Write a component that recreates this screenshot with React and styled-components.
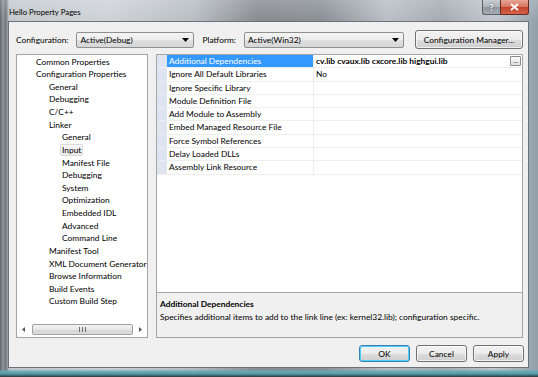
import React from 'react';
import styled, { createGlobalStyle, css } from 'styled-components';

const GlobalStyle = createGlobalStyle`
  html, body {
    margin: 0;
    padding: 0;
  }
  body {
    width: 538px;
    height: 377px;
    overflow: hidden;
    font-family: "Segoe UI", Lato, "Noto Sans", sans-serif;
    color: #000;
  }
`;

const treeItems = [
  { label: 'Common Properties', level: 0 },
  { label: 'Configuration Properties', level: 0 },
  { label: 'General', level: 1 },
  { label: 'Debugging', level: 1 },
  { label: 'C/C++', level: 1 },
  { label: 'Linker', level: 1 },
  { label: 'General', level: 2 },
  { label: 'Input', level: 2, selected: true },
  { label: 'Manifest File', level: 2 },
  { label: 'Debugging', level: 2 },
  { label: 'System', level: 2 },
  { label: 'Optimization', level: 2 },
  { label: 'Embedded IDL', level: 2 },
  { label: 'Advanced', level: 2 },
  { label: 'Command Line', level: 2 },
  { label: 'Manifest Tool', level: 1 },
  { label: 'XML Document Generator', level: 1 },
  { label: 'Browse Information', level: 1 },
  { label: 'Build Events', level: 1 },
  { label: 'Custom Build Step', level: 1 },
];

const properties = [
  { name: 'Additional Dependencies', value: 'cv.lib cvaux.lib cxcore.lib highgui.lib', bold: true, selected: true },
  { name: 'Ignore All Default Libraries', value: 'No' },
  { name: 'Ignore Specific Library', value: '' },
  { name: 'Module Definition File', value: '' },
  { name: 'Add Module to Assembly', value: '' },
  { name: 'Embed Managed Resource File', value: '' },
  { name: 'Force Symbol References', value: '' },
  { name: 'Delay Loaded DLLs', value: '' },
  { name: 'Assembly Link Resource', value: '' },
];

const DropArrow = () => (
  <svg width="7" height="4" viewBox="0 0 7 4">
    <path d="M0 0h7L3.5 4z" fill="#000" />
  </svg>
);

const App = () => {
  return (
    <>
      <GlobalStyle />
      <Window>
        <TitleBar>
          <Title>Hello Property Pages</Title>
          <Controls>
            <HelpButton>?</HelpButton>
            <CloseButton>
              <svg width="9" height="8" viewBox="0 0 9 8">
                <path d="M1 1l7 6M8 1L1 7" stroke="#fff" strokeWidth="1.8" />
              </svg>
            </CloseButton>
          </Controls>
        </TitleBar>
        <Client>
          <ConfigRow>
            <FieldLabel>Configuration:</FieldLabel>
            <Combo $width={118}>
              <span>Active(Debug)</span>
              <DropArrow />
            </Combo>
            <FieldLabel $gap={8}>Platform:</FieldLabel>
            <Combo $width={160}>
              <span>Active(Win32)</span>
              <DropArrow />
            </Combo>
            <ManagerButton>Configuration Manager...</ManagerButton>
          </ConfigRow>

          <Main>
            <TreePanel>
              <TreeList>
                {treeItems.map((item, i) => (
                  <TreeItem key={i} $level={item.level}>
                    <TreeLabel $selected={item.selected}>{item.label}</TreeLabel>
                  </TreeItem>
                ))}
              </TreeList>
              <HScroll>
                <ScrollArrow>
                  <svg width="3" height="5" viewBox="0 0 3 5">
                    <path d="M3 0v5L0 2.5z" fill="#555" />
                  </svg>
                </ScrollArrow>
                <ScrollTrack>
                  <Thumb>
                    <Grip />
                  </Thumb>
                </ScrollTrack>
                <ScrollArrow>
                  <svg width="3" height="5" viewBox="0 0 3 5">
                    <path d="M0 0v5L3 2.5z" fill="#555" />
                  </svg>
                </ScrollArrow>
              </HScroll>
            </TreePanel>

            <RightColumn>
              <Grid>
                {properties.map((p, i) => (
                  <PropRow key={i}>
                    <Gutter />
                    <PropName $selected={p.selected}>{p.name}</PropName>
                    <PropValue $bold={p.bold}>
                      <span>{p.value}</span>
                      {p.selected && <EllipsisButton>...</EllipsisButton>}
                    </PropValue>
                  </PropRow>
                ))}
              </Grid>
              <Description>
                <DescTitle>Additional Dependencies</DescTitle>
                <DescText>
                  Specifies additional items to add to the link line (ex: kernel32.lib); configuration specific.
                </DescText>
              </Description>
            </RightColumn>
          </Main>

          <ButtonRow>
            <DialogButton $default>OK</DialogButton>
            <DialogButton>Cancel</DialogButton>
            <DialogButton>Apply</DialogButton>
          </ButtonRow>
        </Client>
      </Window>
    </>
  );
};

const Window = styled.div`
  width: 538px;
  height: 377px;
  box-sizing: border-box;
  display: flex;
  flex-direction: column;
  padding: 0 9px 9px 8px;
  background:
    linear-gradient(180deg, rgba(255, 255, 255, 0.18) 0px, rgba(255, 255, 255, 0) 21px),
    linear-gradient(0deg, #2e3438 0px, #4f98a4 3px, #62a7b2 5px, rgba(160, 168, 174, 0) 8px),
    linear-gradient(90deg, #5d6268 0px, #8e959b 3px, #6d7378 6px, #c3c9ce 9px, #cdd2d6 20%, #b7bdc2 36%, #868b90 48%, #8a9095 60%, #b9bfc4 72%, #a4abb1 82%, #c2c8cd 92%, #93a0aa 100%);
`;

const TitleBar = styled.div`
  height: 21px;
  display: flex;
  justify-content: space-between;
  align-items: flex-start;
  padding-left: 1px;
`;

const Title = styled.div`
  font-size: 7.8px;
  line-height: 12px;
  margin-top: 6px;
  color: #000;
`;

const Controls = styled.div`
  display: flex;
`;

const captionButton = css`
  height: 15px;
  box-sizing: border-box;
  display: flex;
  align-items: center;
  justify-content: center;
  border: 1px solid #5a6068;
  border-top: none;
`;

const HelpButton = styled.div`
  ${captionButton};
  width: 18px;
  border-right: none;
  border-radius: 0 0 0 3px;
  font-size: 10px;
  font-weight: bold;
  color: #fff;
  text-shadow: 0 0 2px #333;
  background: linear-gradient(180deg, #c9ced3 0%, #aab1b7 50%, #8f979e 51%, #a7afb6 100%);
`;

const CloseButton = styled.div`
  ${captionButton};
  width: 29px;
  border-color: #6a2a20;
  border-radius: 0 0 3px 0;
  background: linear-gradient(180deg, #e8a497 0%, #d7735f 50%, #c2412a 51%, #d2664b 100%);
`;

const Client = styled.div`
  flex: 1;
  display: flex;
  flex-direction: column;
  background: #f0f0f0;
  border: 1px solid #6c7278;
  padding: 8px 5px 0 7px;
  font-size: 8.4px;
`;

const ConfigRow = styled.div`
  height: 19px;
  display: flex;
  align-items: center;
`;

const FieldLabel = styled.span`
  margin-left: ${(p) => p.$gap || 0}px;
  margin-right: 8px;
  white-space: nowrap;
`;

const Combo = styled.div`
  width: ${(p) => p.$width}px;
  height: 16px;
  box-sizing: border-box;
  display: flex;
  align-items: center;
  justify-content: space-between;
  padding: 0 4px 0 3px;
  border: 1px solid #8e8f8f;
  border-radius: 2px;
  background: linear-gradient(180deg, #f4f4f4 0%, #ececec 50%, #e0e0e0 51%, #d6d6d6 100%);
`;

const buttonFace = css`
  box-sizing: border-box;
  display: flex;
  align-items: center;
  justify-content: center;
  border: 1px solid #707070;
  border-radius: 3px;
  background: linear-gradient(180deg, #f2f2f2 0%, #ebebeb 50%, #dddddd 51%, #cfcfcf 100%);
  box-shadow: inset 0 0 0 1px rgba(255, 255, 255, 0.7);
`;

const ManagerButton = styled.div`
  ${buttonFace};
  width: 108px;
  height: 19px;
  margin-left: auto;
`;

const Main = styled.div`
  display: flex;
  gap: 8px;
  margin-top: 5px;
  height: 284px;
`;

const TreePanel = styled.div`
  width: 132px;
  box-sizing: border-box;
  display: flex;
  flex-direction: column;
  border: 1px solid #a5a5a5;
  background: #fff;
`;

const TreeList = styled.div`
  flex: 1;
  overflow: hidden;
  padding-top: 0.5px;
`;

const TreeItem = styled.div`
  height: 12.63px;
  line-height: 12.63px;
  white-space: nowrap;
  padding-left: ${(p) => 19 + p.$level * 13}px;
`;

const TreeLabel = styled.span`
  display: inline-block;
  padding: 0 1px;
  margin-left: -2px;
  border: 1px solid transparent;
  line-height: 10.6px;
  ${(p) =>
    p.$selected &&
    css`
      border-color: #d9d9d9;
      border-radius: 2px;
      background: linear-gradient(180deg, #f8f8f8, #e9e9e9);
    `}
`;

const HScroll = styled.div`
  height: 13px;
  display: flex;
  align-items: center;
  margin: 0 0 1px 0;
`;

const ScrollArrow = styled.div`
  width: 14px;
  height: 13px;
  display: flex;
  align-items: center;
  justify-content: center;
`;

const ScrollTrack = styled.div`
  flex: 1;
  height: 13px;
  display: flex;
  align-items: center;
  padding: 0 2px;
`;

const Thumb = styled.div`
  width: 101px;
  height: 11px;
  box-sizing: border-box;
  border: 1px solid #a0a0a0;
  border-radius: 2px;
  display: flex;
  align-items: center;
  justify-content: center;
  background: linear-gradient(180deg, #f3f3f3 0%, #e6e6e6 50%, #d6d6d6 51%, #dcdcdc 100%);
`;

const Grip = styled.div`
  width: 7px;
  height: 5px;
  background: repeating-linear-gradient(90deg, #6c6c6c 0 1px, transparent 1px 3px);
`;

const RightColumn = styled.div`
  width: 368px;
  display: flex;
  flex-direction: column;
`;

const Grid = styled.div`
  flex: 1;
  box-sizing: border-box;
  border: 1px solid #a5a5a5;
  background: #fff;
`;

const PropRow = styled.div`
  display: grid;
  grid-template-columns: 10px 147px 1fr;
  height: 13.3px;
  box-sizing: border-box;
  border-bottom: 1px solid #eeeeee;
  line-height: 12.3px;
`;

const Gutter = styled.div`
  background: #dfe4f1;
`;

const PropName = styled.div`
  padding-left: 2px;
  white-space: nowrap;
  border-right: 1px solid #eeeeee;
  ${(p) =>
    p.$selected &&
    css`
      background: #3399ff;
      color: #fff;
    `}
`;

const PropValue = styled.div`
  display: flex;
  align-items: center;
  justify-content: space-between;
  padding: 0 1px 0 2px;
  white-space: nowrap;
  font-weight: ${(p) => (p.$bold ? 'bold' : 'normal')};
`;

const EllipsisButton = styled.div`
  width: 11px;
  height: 10px;
  box-sizing: border-box;
  border: 1px solid #8c8c8c;
  border-radius: 1px;
  background: linear-gradient(180deg, #fafafa, #e2e2e2);
  font-size: 7px;
  font-weight: normal;
  line-height: 7px;
  text-align: center;
  color: #333;
`;

const Description = styled.div`
  height: 45px;
  box-sizing: border-box;
  border: 1px solid #a5a5a5;
  border-top: none;
  background: #f0f0f0;
  padding: 5px 3px;
  line-height: 12.5px;
`;

const DescTitle = styled.div`
  font-weight: bold;
`;

const DescText = styled.div`
  white-space: nowrap;
`;

const ButtonRow = styled.div`
  display: flex;
  justify-content: flex-end;
  gap: 6px;
  margin-top: 7px;
  margin-right: -1px;
`;

const DialogButton = styled.div`
  ${buttonFace};
  width: 51px;
  height: 17px;
  ${(p) =>
    p.$default &&
    css`
      border-color: #3c7fb1;
      box-shadow: inset 0 0 0 1px #48d0f8;
    `}
`;

export default App;
